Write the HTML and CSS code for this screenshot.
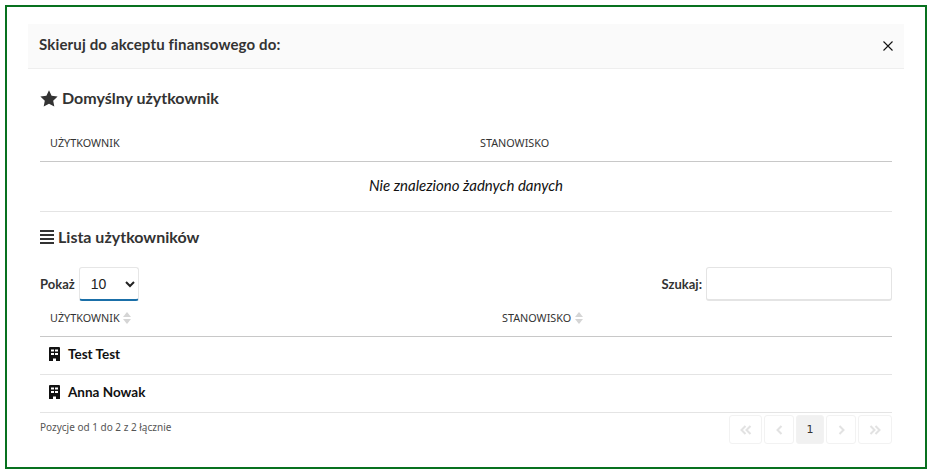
FILE: index.html
```html
<!DOCTYPE html>
<html lang="pl">
<head>
    <meta charset="UTF-8">
    <title>Skieruj do akceptu finansowego</title>
    <link rel="stylesheet" href="styles.css">
</head>
<body>
    <div class="frame">
        <div class="modal-header">
            <div class="modal-title">Skieruj do akceptu finansowego do:</div>
            <svg class="close-icon" viewBox="0 0 10 10" width="10" height="10"><path d="M.5.5l9 9M9.5.5l-9 9" stroke="#111" stroke-width="1.1" fill="none"/></svg>
        </div>
        <div class="modal-body">
            <h3 class="section-title first">
                <svg class="star-icon" viewBox="0 0 18 17" width="18" height="17"><path d="M9 .3l2.600 5.500 6 .8-4.400 4.100 1.100 5.900L9 13.800l-5.300 2.800 1.100-5.900L.4 6.600l6-.8z" fill="#333"/></svg>
                Domyślny użytkownik
            </h3>
            <div class="table-head plain">
                <div class="col-user">UŻYTKOWNIK</div>
                <div>STANOWISKO</div>
            </div>
            <div class="empty-row">Nie znaleziono żadnych danych</div>

            <h3 class="section-title second">
                <svg class="list-icon" viewBox="0 0 14 14" width="14" height="14"><path d="M0 1h14M0 5h14M0 9h14M0 13h14" stroke="#333" stroke-width="2" fill="none"/></svg>
                Lista użytkowników
            </h3>
            <div class="controls">
                <label class="control">Pokaż
                    <select class="page-size"><option>10</option></select>
                </label>
                <label class="control">Szukaj:
                    <input class="search" type="text">
                </label>
            </div>
            <div class="table-head sortable">
                <div class="col-user wide">UŻYTKOWNIK <span class="sort"></span></div>
                <div>STANOWISKO <span class="sort"></span></div>
            </div>
            <div class="user-row">
                <svg class="building-icon" viewBox="0 0 11 14" width="11" height="14"><path fill-rule="evenodd" d="M1 0h9a1 1 0 0 1 1 1v13H7v-2.500H4V14H0V1a1 1 0 0 1 1-1zM2 2.500v2h3v-2zM6 2.500v2h3v-2zM2 6v2h3V6zM6 6v2h3V6z" fill="#111"/></svg>
                Test Test
            </div>
            <div class="user-row">
                <svg class="building-icon" viewBox="0 0 11 14" width="11" height="14"><path fill-rule="evenodd" d="M1 0h9a1 1 0 0 1 1 1v13H7v-2.500H4V14H0V1a1 1 0 0 1 1-1zM2 2.500v2h3v-2zM6 2.500v2h3v-2zM2 6v2h3V6zM6 6v2h3V6z" fill="#111"/></svg>
                Anna Nowak
            </div>
            <div class="table-footer">
                <div class="info">Pozycje od 1 do 2 z 2 łącznie</div>
                <div class="pagination">
                    <span class="page first-page"><svg viewBox="0 0 12 10" width="12" height="10"><path d="M5.500 1L1.500 5l4 4M10.500 1l-4 4 4 4" stroke="#e2e2e2" stroke-width="2" fill="none"/></svg></span>
                    <span class="page prev-page"><svg viewBox="0 0 7 10" width="7" height="10"><path d="M5.500 1l-4 4 4 4" stroke="#e2e2e2" stroke-width="2" fill="none"/></svg></span>
                    <span class="page current">1</span>
                    <span class="page next-page"><svg viewBox="0 0 7 10" width="7" height="10"><path d="M1.500 1l4 4-4 4" stroke="#e2e2e2" stroke-width="2" fill="none"/></svg></span>
                    <span class="page last-page"><svg viewBox="0 0 12 10" width="12" height="10"><path d="M1.500 1l4 4-4 4M6.500 1l4 4-4 4" stroke="#e2e2e2" stroke-width="2" fill="none"/></svg></span>
                </div>
            </div>
        </div>
    </div>
</body>
</html>
```
FILE: styles.css
```css
* {
    box-sizing: border-box;
}
body {
    margin: 0;
    padding: 5px 3px 4px 5px;
    background: #fff;
    font-family: Lato, "Noto Sans", sans-serif;
    color: #333;
}
.frame {
    height: 464px;
    border: 2px solid #08711f;
    padding: 17px 21px 0;
}
.modal-header {
    display: flex;
    align-items: center;
    justify-content: space-between;
    height: 45px;
    padding: 0 11px 4px;
    background: #fafafa;
    border-bottom: 1px solid #eee;
}
.modal-title {
    font-size: 15px;
    font-weight: 700;
    letter-spacing: .15px;
}
.close-icon {
    margin-top: 3px;
}
.modal-body {
    padding: 0 12px;
}
.section-title {
    display: flex;
    align-items: center;
    margin: 0;
    font-size: 16px;
    font-weight: 700;
    line-height: 22px;
}
.section-title.first {
    margin-top: 18px;
    gap: 4px;
}
.section-title.second {
    margin-top: 14px;
    gap: 4px;
}
.table-head {
    display: flex;
    align-items: center;
    padding-left: 10px;
    font-family: "Noto Sans", sans-serif;
    font-size: 10.8px;
    border-bottom: 1px solid #c8c8c8;
}
.table-head.plain {
    height: 40px;
    margin-top: 13px;
    padding-top: 2px;
}
.table-head.sortable {
    height: 36px;
    padding-bottom: 2px;
}
.col-user {
    width: 430px;
}
.col-user.wide {
    width: 452px;
}
.sort {
    display: inline-block;
    position: relative;
    width: 9px;
    height: 12px;
    vertical-align: -2px;
    margin-left: 1px;
}
.sort::before,
.sort::after {
    content: "";
    position: absolute;
    left: 0;
    border-left: 4.500px solid transparent;
    border-right: 4.500px solid transparent;
}
.sort::before {
    top: 0;
    border-bottom: 5px solid #d5d5d5;
}
.sort::after {
    bottom: 0;
    border-top: 5px solid #d5d5d5;
}
.empty-row {
    height: 50px;
    display: flex;
    align-items: center;
    justify-content: center;
    padding-bottom: 4px;
    font-size: 15px;
    font-style: italic;
    color: #111;
    border-bottom: 1px solid #e4e4e4;
}
.controls {
    display: flex;
    justify-content: space-between;
    margin-top: 19px;
}
.control {
    display: flex;
    align-items: center;
    gap: 4px;
    font-size: 13px;
    font-weight: 700;
}
.page-size {
    width: 60px;
    height: 34px;
    padding-left: 7px;
    font-family: "Liberation Sans", sans-serif;
    font-size: 14px;
    color: #222;
    background: #fff;
    border: 1px solid #e6e6e6;
    border-bottom: 2px solid #1a6fa8;
    border-radius: 3px;
}
.search {
    width: 186px;
    height: 34px;
    background: #fff;
    border: 1px solid #e4e4e4;
    border-bottom-width: 2px;
    border-radius: 3px;
}
.user-row {
    display: flex;
    align-items: center;
    gap: 8px;
    height: 38px;
    padding-left: 9px;
    padding-bottom: 4px;
    font-size: 13.500px;
    font-weight: 700;
    color: #111;
    border-bottom: 1px solid #e4e4e4;
}
.table-footer {
    display: flex;
    justify-content: space-between;
    padding-top: 2px;
}
.info {
    padding-top: 5px;
    font-size: 10px;
    font-family: "Noto Sans", sans-serif;
    color: #555;
}
.pagination {
    display: flex;
    gap: 2px;
}
.page {
    display: flex;
    align-items: center;
    justify-content: center;
    height: 29px;
    border: 1px solid #f2f2f2;
    border-radius: 3px;
}
.first-page {
    width: 33px;
}
.prev-page,
.next-page {
    width: 30px;
}
.last-page {
    width: 34px;
}
.page.current {
    width: 28px;
    font-family: "DejaVu Sans", sans-serif;
    font-size: 11px;
    color: #333;
    background: #f1f1f1;
}
```
